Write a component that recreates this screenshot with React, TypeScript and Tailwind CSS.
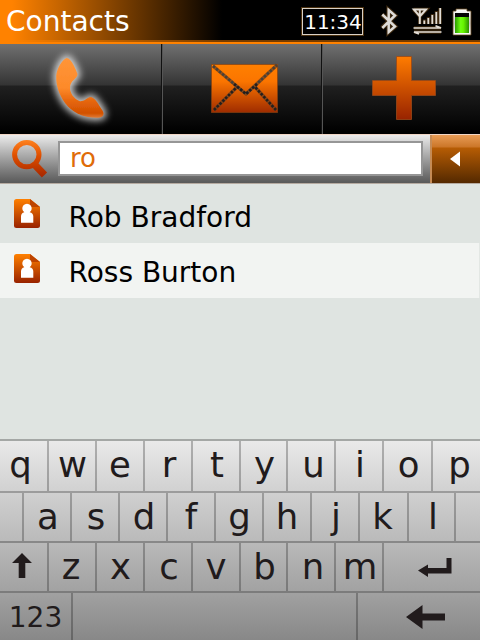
import React from "react";

function StatusIcons() {
  return (
    <svg width="106" height="40" viewBox="374 0 106 40" className="shrink-0">
      <defs>
        <linearGradient id="metal" x1="0" y1="0" x2="0" y2="1">
          <stop offset="0" stopColor="#fff" />
          <stop offset="0.55" stopColor="#d0ccc8" />
          <stop offset="1" stopColor="#fff" />
        </linearGradient>
        <linearGradient id="charge" x1="0" y1="0" x2="1" y2="0">
          <stop offset="0" stopColor="#2c9a00" />
          <stop offset="0.4" stopColor="#70ff10" />
          <stop offset="0.6" stopColor="#66f400" />
          <stop offset="1" stopColor="#2c9000" />
        </linearGradient>
      </defs>
      <path d="M382 14.5 L395 26.5 L388.7 32 V10 L395 15.5 L382 28" fill="none" stroke="#3d280e" strokeWidth="4.6" />
      <path d="M382.3 14.5 L395 26.5 L388.7 32 V10 L395 15.5 L382.3 28" fill="none" stroke="#dedbd7" strokeWidth="2.5" />
      <g stroke="#3d280e" strokeWidth="3.5" fill="none">
        <path d="M413.5 9.5 H426.5 L419.8 16.5 L413.5 9.5 M419.8 9 V24" />
        <path d="M424.5 19.5V24 M428.5 17V24 M432.5 14V24 M436.5 11V24 M440 8V24 M414 28H441 M414 32H441" />
      </g>
      <g stroke="#e2ddd6" strokeWidth="1.6" fill="none">
        <path d="M413.8 9.5 H426 L419.8 16.5 Z M419.8 9 V24" strokeWidth="2" />
        <path d="M424.3 20.5V24 M428.3 18V24 M432.3 15V24 M436.3 12V24 M440.2 8V24" strokeWidth="1.8" />
        <path d="M413.5 28H441L435.5 25.7 M441.5 32H414L419 34" strokeWidth="1.7" />
      </g>
      <path d="M456 9H467V11H471V35H453V11H456Z" fill="url(#metal)" stroke="#60451f" strokeWidth=".8" />
      <path d="M455 13H469V17H455Z" fill="#050505" />
      <path d="M455 17H469V33H455Z" fill="url(#charge)" />
    </svg>
  );
}

function PhoneIcon() {
  return (
    <svg width="100" height="90" viewBox="30 44 100 90">
      <defs>
        <linearGradient id="phone" x1="0" y1="0" x2="0" y2="1">
          <stop offset="0" stopColor="#ff9538" />
          <stop offset="0.5" stopColor="#fd8a2a" />
          <stop offset="0.7" stopColor="#e8690f" />
          <stop offset="0.92" stopColor="#d25000" />
          <stop offset="1" stopColor="#e07a35" />
        </linearGradient>
        <filter id="halo" x="-60%" y="-60%" width="220%" height="220%">
          <feGaussianBlur stdDeviation="3.8" />
        </filter>
        <filter id="soften" x="-10%" y="-10%" width="120%" height="120%">
          <feGaussianBlur stdDeviation=".6" />
        </filter>
      </defs>
      <path d="M66.5 58C62 60 57 68 56.2 76C56 86 59 94 65 103C72 112 82 118 98 117.8C104 117.5 104.500 114 102.500 110.500C98 104 95 97 90 97C87 98 84 101.500 80 101.200C74 99 70 93 70 88C70 80 77.500 79 77.500 74C76 70 71.500 58 66.500 58Z" fill="#fff" stroke="#fff" strokeWidth="6" filter="url(#halo)" opacity=".75" />
      <path d="M66.500 58C62 60 57 68 56.200 76C56 86 59 94 65 103C72 112 82 118 98 117.800C104 117.500 104.500 114 102.500 110.500C98 104 95 97 90 97C87 98 84 101.500 80 101.200C74 99 70 93 70 88C70 80 77.500 79 77.500 74C76 70 71.500 58 66.500 58Z" fill="url(#phone)" filter="url(#soften)" />
    </svg>
  );
}

function MailIcon() {
  return (
    <svg width="80" height="90" viewBox="204 44 80 90">
      <defs>
        <linearGradient id="mail" x1="0" y1="0" x2="0" y2="1">
          <stop offset="0" stopColor="#ff8000" />
          <stop offset=".35" stopColor="#fb7500" />
          <stop offset="1" stopColor="#9f2c00" />
        </linearGradient>
      </defs>
      <rect x="211.5" y="64.5" width="66" height="48" fill="url(#mail)" stroke="#85410f" strokeOpacity=".65" />
      <path d="M213 66L246 94L277 65M214 110L237 87M276 110L255 87" fill="none" stroke="#70401c" strokeWidth="3.5" opacity=".75" />
      <path d="M213 66L246 94L277 65" fill="none" stroke="#47413a" strokeWidth="2.6" strokeDasharray="2.5 1.5" />
      <path d="M214 110L237 87M276 110L255 87M234 84L246 94L257 84" fill="none" stroke="#241f1d" strokeWidth="2.6" strokeDasharray="2.5 1.5" />
    </svg>
  );
}

function PlusIcon() {
  return (
    <svg width="80" height="90" viewBox="364 44 80 90">
      <defs>
        <linearGradient id="plus" x1="0" y1="0" x2="0" y2="1">
          <stop offset="0" stopColor="#ff7c00" />
          <stop offset="1" stopColor="#982300" />
        </linearGradient>
      </defs>
      <path d="M396.5 56.5H411.5V80.5H435.5V95.5H411.5V119.5H396.5V95.5H372.5V80.5H396.5Z" fill="url(#plus)" stroke="#9a4818" strokeOpacity=".8" />
    </svg>
  );
}

function SearchIcon() {
  return (
    <svg width="58" height="49" viewBox="0 135 58 49" className="shrink-0">
      <defs>
        <linearGradient id="search" gradientUnits="userSpaceOnUse" x1="0" y1="140" x2="0" y2="178">
          <stop offset="0" stopColor="#ff8320" />
          <stop offset=".4" stopColor="#e05000" />
          <stop offset="1" stopColor="#a32500" />
        </linearGradient>
      </defs>
      <path d="M35 165L44.5 175" stroke="url(#search)" strokeWidth="7.2" />
      <circle cx="26.8" cy="154.6" r="12.2" fill="none" stroke="url(#search)" strokeWidth="5" />
    </svg>
  );
}

function ContactIcon() {
  return (
    <svg width="26" height="30" viewBox="0 0 26 30" className="shrink-0">
      <defs>
        <linearGradient id="card" x1="0" y1="0" x2="0" y2="1">
          <stop offset="0" stopColor="#ff8000" />
          <stop offset="1" stopColor="#982200" />
        </linearGradient>
      </defs>
      <path d="M2.5 0H16L26 8V26.5Q26 29 23.5 29H2.5Q0 29 0 26.5V2.5Q0 0 2.5 0Z" fill="url(#card)" />
      <path d="M16 0L26 8H16Z" fill="#bd4300" />
      <path d="M7 23.7V17.5Q7 14.2 10.3 13.3A4.7 4.7 0 1 1 15.7 13.3Q19.3 14.2 19.3 17.5V23.7Z" fill="#fff" />
    </svg>
  );
}

function ContactRow({ name, active }: { name: string; active?: boolean }) {
  return (
    <div className={`flex h-[55px] items-start pl-[14px] pt-[11px] ${active ? "border-r border-[#e3e7e4] bg-[#f2f4f2]" : "bg-[#dfe4e1]"}`}>
      <ContactIcon />
      <span className="ml-[28.5px] mt-[2px] whitespace-nowrap text-[28px] leading-[34px] text-black">{name}</span>
    </div>
  );
}

type KeyDef = { width: string; label: React.ReactNode };

const ShiftGlyph = (
  <svg width="20" height="26" viewBox="0 0 20 26" className="-ml-[4px] -mt-px">
    <path d="M10 0L20 10H13.3V25H6.7V10H0Z" fill="#211b1c" />
  </svg>
);
const EnterGlyph = (
  <svg width="34" height="20" viewBox="0 0 34 20" className="ml-[6px]">
    <path d="M0 13.5L10 7.500V11H28.500V1H33.500V16.500H10V20Z" fill="#211b1c" />
  </svg>
);
const BackGlyph = (
  <svg width="40" height="24" viewBox="0 0 40 24" className="ml-[14px]">
    <path d="M0 12L16.500 0V8.500H39V15.500H16.500V24Z" fill="#211b1c" />
  </svg>
);

const topRow: KeyDef[] = [
  { width: "w-[49px] pr-[6px]", label: "q" },
  { width: "w-12 pl-px", label: "w" },
  { width: "w-12", label: "e" },
  { width: "w-12 pl-[2px]", label: "r" },
  { width: "w-12 pl-[2px]", label: "t" },
  { width: "w-[47px] pl-[2px]", label: "y" },
  { width: "w-12 pl-[5px]", label: "u" },
  { width: "w-12 pl-[2px]", label: "i" },
  { width: "w-[49px] pl-[2px]", label: "o" },
  { width: "w-[47px] pl-[6px]", label: "p" },
];
const homeRow: KeyDef[] = [
  { width: "w-6", label: "" },
  { width: "w-12 pl-[2px]", label: "a" },
  { width: "w-12 pl-[2px]", label: "s" },
  { width: "w-12 pl-[2px]", label: "d" },
  { width: "w-12", label: "f" },
  { width: "w-12 pl-px", label: "g" },
  { width: "w-12", label: "h" },
  { width: "w-12 pl-[2px]", label: "j" },
  { width: "w-[49px] pr-[2px]", label: "k" },
  { width: "w-[47px] pl-[3px]", label: "l" },
  { width: "w-6", label: "" },
];
const lowerRow: KeyDef[] = [
  { width: "w-[49px]", label: ShiftGlyph },
  { width: "w-12 pr-[2px]", label: "z" },
  { width: "w-12 pl-px", label: "x" },
  { width: "w-12 pl-[2px]", label: "c" },
  { width: "w-12", label: "v" },
  { width: "w-[47px] pl-[2px]", label: "b" },
  { width: "w-12 pl-[4px]", label: "n" },
  { width: "w-12 pl-[2px]", label: "m" },
  { width: "w-24", label: EnterGlyph },
];
const bottomRow: KeyDef[] = [
  { width: "w-[73px] pt-[3px] text-[28px]", label: "123" },
  { width: "w-[285px]", label: "" },
  { width: "w-[122px]", label: BackGlyph },
];

function KeyRow({ keys, tone, keyPad }: { keys: KeyDef[]; tone: string; keyPad: string }) {
  return (
    <div className={`flex bg-linear-to-b ${tone}`}>
      {keys.map((key, i) => (
        <div key={i} className={`flex shrink-0 items-center justify-center border-black/25 leading-none ${i < keys.length - 1 ? "border-r-2" : ""} ${keyPad} ${key.width}`}>
          {key.label}
        </div>
      ))}
    </div>
  );
}

export default function App() {
  return (
    <div className="flex h-[640px] w-[480px] flex-col overflow-hidden bg-[#dfe4e1] font-['DejaVu_Sans',sans-serif]">
      <header className="flex h-10 shrink-0 items-center bg-[linear-gradient(to_right,#ff8200_0,#ff8200_12px,#000_222px)]">
        <h1 className="w-[302px] pl-[6px] pt-[3px] text-[28px] leading-none text-white">Contacts</h1>
        <div className="mt-[3px] flex h-[27px] w-[61px] items-center justify-center border border-[#d8d0c6] pl-px text-[20px] leading-none text-white outline outline-[#49300f]">11:34</div>
        <div className="w-[11px]" />
        <StatusIcons />
      </header>
      <div className="h-[2px] shrink-0 bg-[linear-gradient(to_right,#ff8200_12px,#743b00_222px)]" />
      <div className="h-[2px] shrink-0 bg-[#ff8200]" />

      <nav className="flex h-[90px] shrink-0 bg-[linear-gradient(to_bottom,#707070_0,#343434_41px,#202020_42px,#000_88px)]">
        <div className="flex w-[162px] border-r border-[#111] pl-[30px]"><PhoneIcon /></div>
        <div className="flex w-[160px] border-r border-l border-r-[#111] border-l-[#555] pl-[41px]"><MailIcon /></div>
        <div className="flex w-[158px] border-l border-[#555] pl-[41px]"><PlusIcon /></div>
      </nav>

      <div className="flex h-[50px] shrink-0 border-b border-t border-b-[#b5aaa0] border-t-[#f1d6c5] bg-linear-to-b from-[#ececec] to-[#595959]">
        <SearchIcon />
        <div className="mt-[6px] flex h-[35px] w-[365px] items-center border-2 border-[#969696] bg-white pb-px pl-[10px] text-[26px] leading-none text-[#e06c08]">ro</div>
        <div className="w-[7px]" />
        <button className="flex w-[50px] items-center justify-center border-l-2 border-[#c58b55] bg-[linear-gradient(to_bottom,#e89c56_0,#cb7628_12px,#b65c04_13px,#542900_100%)] pr-[2px]">
          <svg width="10" height="16" viewBox="0 0 10 16"><path d="M0 8L10 .5V15.5Z" fill="#fff" /></svg>
        </button>
      </div>

      <main className="flex grow flex-col pt-1">
        <ContactRow name="Rob Bradford" />
        <ContactRow name="Ross Burton" active />
      </main>

      <div className="grid h-[201px] shrink-0 grid-rows-[52px_50px_50px_47px] border-t-2 border-[#a4a7a5] text-[35.5px] text-[#211b1c]">
        <KeyRow keys={topRow} keyPad="pb-[2px]" tone="border-b-2 border-[#9c9c9c] from-[#e9e9e9] to-[#d1d1d1]" />
        <KeyRow keys={homeRow} keyPad="pb-px" tone="border-b-2 border-[#888888] from-[#d0d0d0] to-[#bababa]" />
        <KeyRow keys={lowerRow} keyPad="pb-px" tone="border-b-2 border-[#7c7c7c] from-[#b9b9b9] to-[#a2a2a2]" />
        <KeyRow keys={bottomRow} keyPad="pb-0" tone="from-[#a1a1a1] to-[#888888]" />
      </div>
    </div>
  );
}
